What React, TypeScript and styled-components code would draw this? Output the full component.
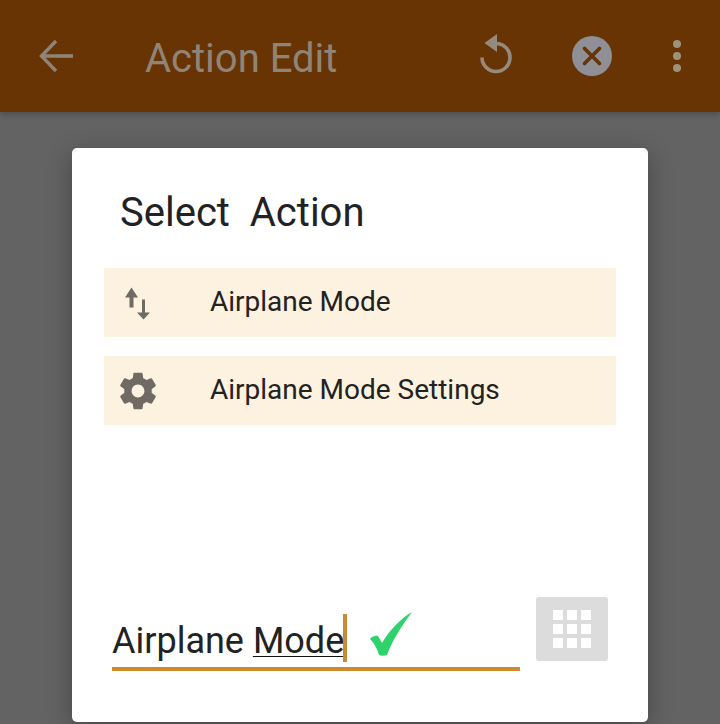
import React from 'react';
import styled, { createGlobalStyle } from 'styled-components';

const GlobalStyle = createGlobalStyle`
  html, body {
    margin: 0;
    padding: 0;
    background: #636363;
    font-family: Roboto, "Liberation Sans", sans-serif;
  }
`;

const Page = styled.div`
  width: 720px;
  height: 724px;
  overflow: hidden;
  background: #636363;
`;

const AppBar = styled.header`
  height: 112px;
  background: #693403;
  display: flex;
  align-items: center;
  color: #8f8478;
  box-shadow: 0 2px 6px rgba(0, 0, 0, 0.25);
`;

const BackIcon = styled.svg`
  width: 36px;
  height: 36px;
  margin-left: 38px;
  flex: none;
`;

const Title = styled.div`
  font-size: 40px;
  margin-left: 71px;
  flex: 1;
  padding-top: 5px;
  line-height: 107px;
`;

const ActionIcon = styled.svg<{ $gap: number }>`
  flex: none;
  margin-right: ${props => props.$gap}px;
`;

const Dialog = styled.section`
  width: 576px;
  height: 574px;
  margin: 36px 0 0 72px;
  box-sizing: border-box;
  padding: 0 32px;
  background: #fff;
  border-radius: 5px;
  box-shadow: 0 6px 24px rgba(0, 0, 0, 0.3);
  display: flex;
  flex-direction: column;
`;

const DialogTitle = styled.h2`
  margin: 0;
  padding: 40px 0 0 16px;
  height: 120px;
  box-sizing: border-box;
  font-size: 40px;
  line-height: 50px;
  font-weight: 400;
  color: #222;
  white-space: pre;
`;

const ActionList = styled.div`
  display: flex;
  flex-direction: column;
  gap: 19px;
`;

const ActionRow = styled.div`
  height: 69px;
  background: #fdf1df;
  display: flex;
  align-items: center;
  font-size: 28px;
  color: #222;
`;

const RowLabel = styled.span`
  padding-bottom: 3px;
`;

const RowIcon = styled.div`
  width: 106px;
  height: 44px;
  flex: none;
  display: flex;
  align-items: center;
  padding-left: 12px;
  box-sizing: border-box;
`;

const Footer = styled.div`
  margin-top: 172px;
  display: flex;
  align-items: flex-start;
  margin-left: 8px;
  margin-right: 8px;
`;

const InputField = styled.div`
  width: 408px;
  height: 74px;
  box-sizing: border-box;
  border-bottom: 4px solid #cf8a2e;
  position: relative;
`;

const InputText = styled.div`
  font-size: 36px;
  line-height: 42px;
  color: #222;
  padding-top: 23px;
  white-space: pre;
`;

const Composing = styled.span`
  text-decoration: underline;
  text-decoration-thickness: 1px;
  text-underline-offset: 3px;
  text-decoration-color: #111;
`;

const Caret = styled.span`
  position: absolute;
  left: 231px;
  top: 17px;
  width: 4px;
  height: 48px;
  background: #c98a34;
`;

const CheckIcon = styled.svg`
  position: absolute;
  left: 256px;
  top: 14px;
`;

const KeypadButton = styled.div`
  width: 72px;
  height: 64px;
  margin-left: 16px;
  background: #dcdcdc;
  border-radius: 3px;
  display: flex;
  align-items: center;
  justify-content: center;
`;

const KeyGrid = styled.div`
  display: grid;
  grid-template-columns: repeat(3, 10px);
  grid-auto-rows: 10px;
  gap: 4px;
`;

const Key = styled.span`
  background: #fff;
`;

export default function App() {
  return (
    <Page>
      <GlobalStyle />
      <AppBar>
        <BackIcon viewBox="0 0 36 36" fill="none" stroke="#8f8478" strokeWidth="3.4">
          <path d="M35 18H4M18 3 3.500 18 18 33" />
        </BackIcon>
        <Title>Action Edit</Title>
        <ActionIcon $gap={58} width="36" height="44" viewBox="0 0 36 44" fill="none">
          <path d="M17 9.500h2a14 14 0 1 1-15 14" stroke="#948a7e" strokeWidth="3.6" />
          <path d="M19 0v18L6.500 9Z" fill="#948a7e" />
        </ActionIcon>
        <ActionIcon $gap={60} width="40" height="40" viewBox="0 0 40 40">
          <circle cx="20" cy="20" r="20" fill="#8e8f97" />
          <path d="M12.500 12.500l15 15M27.500 12.500l-15 15" stroke="#693403" strokeWidth="3.6" strokeLinecap="round" />
        </ActionIcon>
        <ActionIcon $gap={38} width="10" height="34" viewBox="0 0 10 34">
          <circle cx="5" cy="5" r="4" fill="#9a9478" />
          <circle cx="5" cy="17" r="4" fill="#9a9478" />
          <circle cx="5" cy="29" r="4" fill="#9a9478" />
        </ActionIcon>
      </AppBar>
      <Dialog>
        <DialogTitle>Select  Action</DialogTitle>
        <ActionList>
          <ActionRow>
            <RowIcon>
              <svg width="36" height="36" viewBox="0 0 36 36" fill="#6f6a64">
                <path d="M15.500 2.500 9 12.500h4.500v10h4v-10H22Z" />
                <path d="M27.500 34.500 34 27.500h-5v-13h-3v13h-5Z" />
              </svg>
            </RowIcon>
            <RowLabel>Airplane Mode</RowLabel>
          </ActionRow>
          <ActionRow>
            <RowIcon>
              <svg width="44" height="44" viewBox="0 0 24 24" fill="#6f6a64">
                <path d="M19.430 12.980c.04-.32.07-.64.07-.98s-.03-.66-.07-.98l2.110-1.650c.19-.15.24-.42.12-.64l-2-3.460c-.12-.22-.39-.3-.61-.22l-2.490 1c-.52-.4-1.080-.73-1.690-.98l-.38-2.650C14.460 2.180 14.250 2 14 2h-4c-.25 0-.46.18-.49.42l-.38 2.650c-.61.25-1.170.59-1.690.98l-2.490-1c-.23-.09-.49 0-.61.22l-2 3.460c-.13.22-.07.49.12.64l2.110 1.650c-.04.32-.07.65-.07.98s.03.66.07.98l-2.110 1.650c-.19.15-.24.42-.12.64l2 3.460c.12.22.39.3.61.22l2.490-1c.52.4 1.080.73 1.690.98l.38 2.650c.03.24.24.42.49.42h4c.25 0 .46-.18.49-.42l.38-2.650c.61-.25 1.170-.59 1.690-.98l2.490 1c.23.09.49 0 .61-.22l2-3.460c.12-.22.07-.49-.12-.64l-2.110-1.650zM12 15.500c-1.930 0-3.500-1.570-3.500-3.500s1.570-3.500 3.500-3.500 3.500 1.570 3.500 3.500-1.570 3.500-3.500 3.500z" />
              </svg>
            </RowIcon>
            <RowLabel>Airplane Mode Settings</RowLabel>
          </ActionRow>
        </ActionList>
        <Footer>
          <InputField>
            <InputText>Airplane <Composing>Mode</Composing></InputText>
            <Caret />
            <CheckIcon width="50" height="50" viewBox="0 0 50 50">
              <path d="M2 28c1-2 6-4 8-3l4 7C21 20 32 8 44 1 35 13 25 28 19 44c-3 1-6 1-8 0C9 37 6 32 2 28Z" fill="#30d26c" />
            </CheckIcon>
          </InputField>
          <KeypadButton>
            <KeyGrid>
              {Array.from({ length: 9 }).map((_, i) => (
                <Key key={i} />
              ))}
            </KeyGrid>
          </KeypadButton>
        </Footer>
      </Dialog>
    </Page>
  );
}
